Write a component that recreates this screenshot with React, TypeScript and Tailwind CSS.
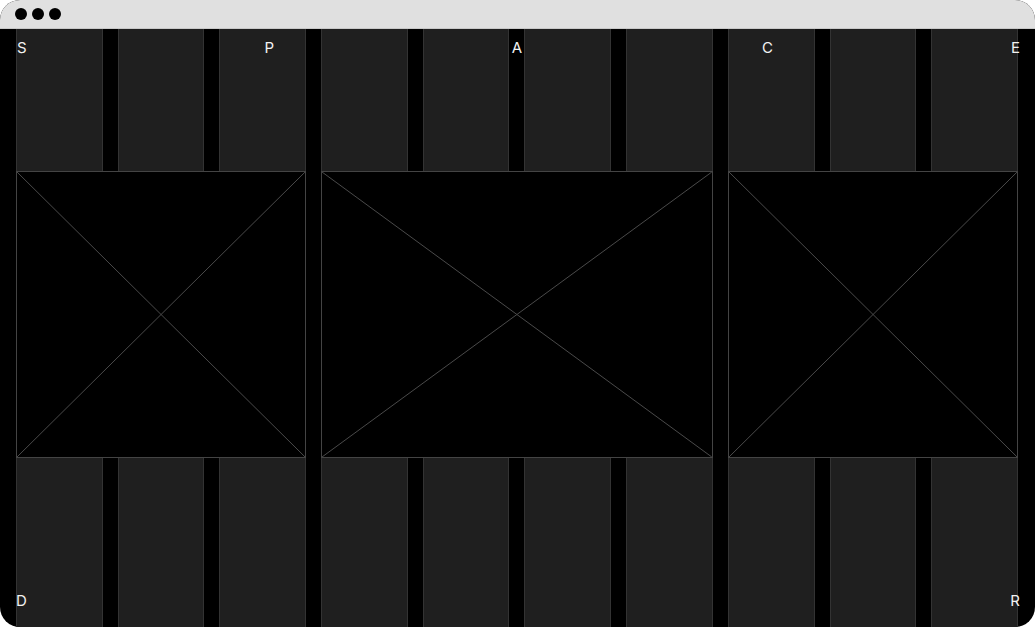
import React from "react";

const cols = Array.from({ length: 10 });

function Placeholder({ span }: { span: string }) {
  return (
    <div className={`${span} relative h-[287px] border border-[#444444] bg-black`}>
      <svg className="absolute inset-0 h-full w-full" preserveAspectRatio="none" viewBox="0 0 100 100">
        <line x1="0" y1="0" x2="100" y2="100" stroke="#4a4a4a" strokeWidth="1" vectorEffect="non-scaling-stroke" />
        <line x1="100" y1="0" x2="0" y2="100" stroke="#4a4a4a" strokeWidth="1" vectorEffect="non-scaling-stroke" />
      </svg>
    </div>
  );
}

export default function App() {
  return (
    <div className="h-[627px] w-[1035px] bg-white" style={{ fontFamily: "Inter, 'Noto Sans', sans-serif" }}>
      <div className="flex h-full w-full flex-col overflow-hidden rounded-[20px] bg-black">
        <div className="flex h-[29px] shrink-0 items-center gap-[5px] border-b border-[#c8c8c8] bg-[#e0e0e0] pl-[15px]">
          <span className="h-[12px] w-[12px] rounded-full bg-black" />
          <span className="h-[12px] w-[12px] rounded-full bg-black" />
          <span className="h-[12px] w-[12px] rounded-full bg-black" />
        </div>
        <div className="relative flex-1">
          <div className="absolute inset-y-0 left-[16px] right-[17px] grid grid-cols-10 gap-[15px]">
            {cols.map((_, i) => (
              <div key={i} className="border-x border-[#333333] bg-[#1f1f1f]" />
            ))}
          </div>
          <div className="relative mx-[16px] mr-[17px] h-full">
            <div className="relative grid grid-cols-10 gap-[15px] pt-[142px]">
              <Placeholder span="col-span-3" />
              <Placeholder span="col-span-4" />
              <Placeholder span="col-span-3" />
            </div>
            <div className="absolute left-[1px] top-[11px] text-[15px] leading-none text-[#f2f2f2]">S</div>
            <div className="absolute left-1/4 top-[11px] -translate-x-[2px] text-[15px] leading-none text-[#f2f2f2]">P</div>
            <div className="absolute left-1/2 top-[11px] -translate-x-1/2 text-[15px] leading-none text-[#f2f2f2]">A</div>
            <div className="absolute left-3/4 top-[11px] -translate-x-1/2 text-[15px] leading-none text-[#f2f2f2]">C</div>
            <div className="absolute right-[-2px] top-[11px] text-[15px] leading-none text-[#f2f2f2]">E</div>
            <div className="absolute bottom-[19px] left-0 text-[15px] leading-none text-[#f2f2f2]">D</div>
            <div className="absolute bottom-[19px] right-[-2px] text-[15px] leading-none text-[#f2f2f2]">R</div>
          </div>
        </div>
      </div>
    </div>
  );
}
